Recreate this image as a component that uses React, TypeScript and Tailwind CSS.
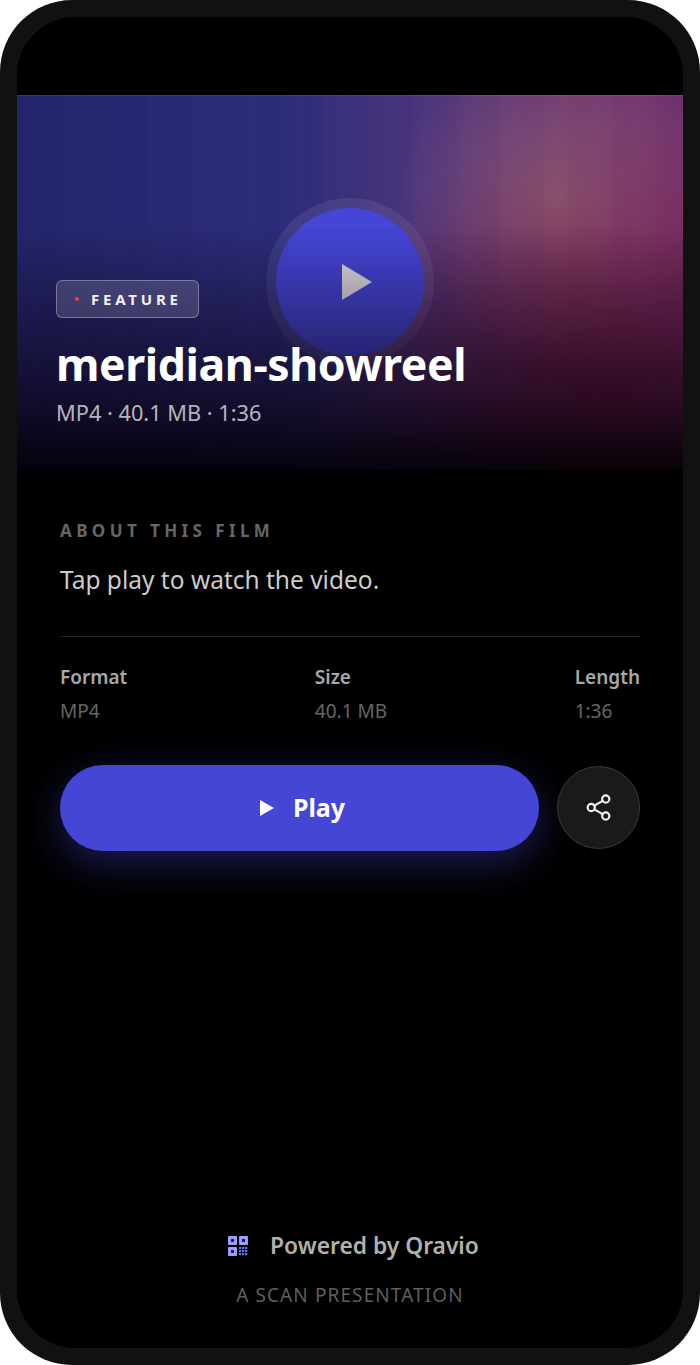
import { Share2 } from "lucide-react"

function QrMark() {
  return (
    <svg width="20" height="20" viewBox="0 0 20 20">
      <rect x="0" y="0" width="9" height="9" rx="1" fill="#9a9dfb" />
      <rect x="3" y="3" width="3" height="3" fill="#1a1a66" />
      <rect x="11" y="0" width="9" height="9" rx="1" fill="#9a9dfb" />
      <rect x="14" y="3" width="3" height="3" fill="#1a1a66" />
      <rect x="0" y="11" width="9" height="9" rx="1" fill="#9a9dfb" />
      <rect x="3" y="14" width="3" height="3" fill="#1a1a66" />
      {[11, 14, 17].map((x) =>
        [11, 14, 17].map((y) => (
          <rect key={`${x}-${y}`} x={x} y={y} width="2.2" height="2.2" fill="#6d70f0" />
        ))
      )}
    </svg>
  )
}

function Spec({ label, value }: { label: string; value: string }) {
  return (
    <div className="flex flex-col items-start">
      <span className="text-[19px] leading-[26px] font-semibold text-[#a8a8a8]">{label}</span>
      <span className="mt-[8px] text-[19px] leading-[26px] text-[#666666]">{value}</span>
    </div>
  )
}

export default function App() {
  return (
    <div className="w-[700px] h-[1365px] bg-white font-['Noto_Sans',sans-serif]">
      <div className="h-full rounded-[72px] bg-[#111111] p-[17px]">
        <div className="h-full flex flex-col rounded-[58px] overflow-hidden bg-black">
          <div className="h-[78px] shrink-0" />

          <div className="relative h-[375px] shrink-0 overflow-hidden bg-[linear-gradient(90deg,#23246c_0%,#2d2c7a_40%,#4c357c_62%,#69336e_82%,#70306c_100%)]">
            <div className="absolute inset-0 bg-[radial-gradient(circle_at_81%_28%,rgba(170,125,125,0.55)_0%,rgba(170,115,125,0.28)_13%,rgba(170,110,125,0)_27%)]" />
            <div className="absolute inset-0 bg-[radial-gradient(circle_at_88%_80%,rgba(120,15,50,0.6)_0%,rgba(120,15,50,0.3)_22%,rgba(120,15,50,0)_42%)]" />
            <div className="absolute inset-0 bg-[repeating-linear-gradient(90deg,rgba(255,255,255,0.005)_0px,rgba(255,255,255,0.005)_22px,rgba(0,0,0,0.01)_22px,rgba(0,0,0,0.01)_44px)]" />
            <div className="absolute left-[249px] top-[103px] w-[168px] h-[168px] rounded-full bg-white/8 p-[10px]">
              <div className="w-full h-full rounded-full bg-[#4545d6] flex items-center justify-center">
                <svg width="30" height="36" viewBox="0 0 30 36" className="ml-[13px]">
                  <polygon points="0,0 30,18 0,36" fill="#dedee2" />
                </svg>
              </div>
            </div>
            <div className="absolute inset-0 shadow-[inset_0_1px_0_rgba(255,255,255,0.08)] bg-[linear-gradient(to_bottom,rgba(8,0,12,0)_35%,rgba(8,0,12,0.38)_62%,rgba(8,0,12,0.72)_85%,rgba(4,0,6,0.96)_100%)]" />
            <div className="absolute left-[39px] top-[185px] flex flex-col items-start">
              <div className="w-[143px] h-[38px] flex items-center pl-[18px] rounded-[6px] border-[1.5px] border-white/30 bg-white/15">
                <span className="w-[4px] h-[4px] rounded-full bg-[#ef4444]" />
                <span className="ml-[12px] text-[15px] font-bold tracking-[3.8px] text-[#f1f1f5]">FEATURE</span>
              </div>
              <h1 className="mt-[16px] text-[44.6px] leading-[60px] font-bold tracking-[-0.4px] text-white">meridian-showreel</h1>
              <p className="mt-[4px] text-[21.75px] leading-[30px] text-white/70">MP4 · 40.1 MB · 1:36</p>
            </div>
          </div>

          <div className="flex-1 flex flex-col px-[43px]">
            <p className="mt-[49px] text-[17px] leading-[24px] font-bold tracking-[4.4px] text-[#666666]">ABOUT THIS FILM</p>
            <p className="mt-[20px] text-[24.5px] leading-[34px] text-[#cccccc]">Tap play to watch the video.</p>
            <div className="mt-[39px] border-t border-[#222222]" />
            <div className="mt-[27px] flex justify-between">
              <Spec label="Format" value="MP4" />
              <Spec label="Size" value="40.1 MB" />
              <Spec label="Length" value="1:36" />
            </div>
            <div className="mt-[41px] flex items-start gap-[18px]">
              <button className="flex-1 h-[86px] pl-[6px] rounded-full bg-[#4545d6] flex items-center justify-center shadow-[0_12px_40px_rgba(69,69,214,0.4)]">
                <svg width="14" height="16" viewBox="0 0 14 16">
                  <polygon points="0,0 14,8 0,16" fill="#ffffff" />
                </svg>
                <span className="ml-[19px] text-[25px] font-bold text-white">Play</span>
              </button>
              <button className="w-[83px] h-[83px] mt-[1px] shrink-0 rounded-full bg-[#1a1a1a] border border-[#3a3a3a] flex items-center justify-center">
                <Share2 size={29} strokeWidth={1.8} className="text-[#f0f0f0]" />
              </button>
            </div>
            <div className="mt-auto pb-[40px] flex flex-col items-center">
              <div className="ml-[7px] flex items-center gap-[22px]">
                <QrMark />
                <span className="text-[22.8px] leading-[32px] font-semibold text-[#b0b0b0]">Powered by Qravio</span>
              </div>
              <p className="mt-[20px] text-[19px] leading-[26px] tracking-[1.1px] text-[#5f5f5f]">A SCAN PRESENTATION</p>
            </div>
          </div>
        </div>
      </div>
    </div>
  )
}
